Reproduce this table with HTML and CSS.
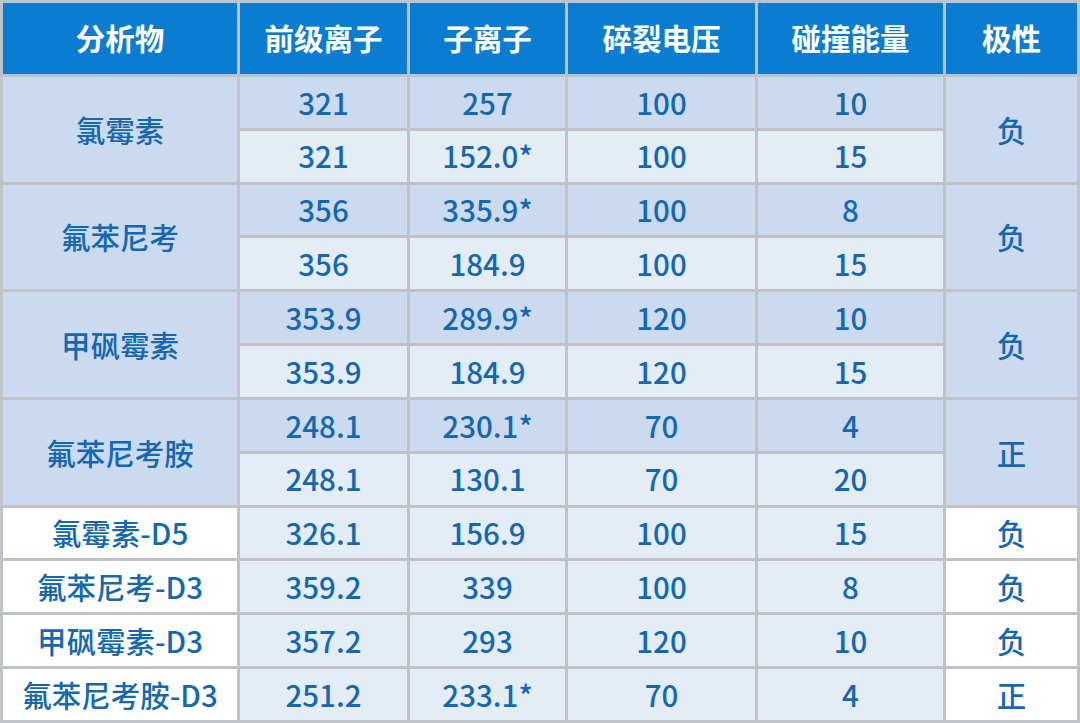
FILE: index.html
```html
<!DOCTYPE html>
<html lang="zh">
<head>
<meta charset="utf-8">
<link rel="stylesheet" href="styles.css">
</head>
<body>
<div class="grid">
  <div class="hd">分析物</div>
  <div class="hd">前级离子</div>
  <div class="hd">子离子</div>
  <div class="hd">碎裂电压</div>
  <div class="hd">碰撞能量</div>
  <div class="hd">极性</div>

  <div class="c m span2">氯霉素</div>
  <div class="c d">321</div><div class="c d">257</div><div class="c d">100</div><div class="c d">10</div>
  <div class="c m span2">负</div>
  <div class="c l">321</div><div class="c l">152.0*</div><div class="c l">100</div><div class="c l">15</div>

  <div class="c m span2">氟苯尼考</div>
  <div class="c d">356</div><div class="c d">335.9*</div><div class="c d">100</div><div class="c d">8</div>
  <div class="c m span2">负</div>
  <div class="c l">356</div><div class="c l">184.9</div><div class="c l">100</div><div class="c l">15</div>

  <div class="c m span2">甲砜霉素</div>
  <div class="c d">353.9</div><div class="c d">289.9*</div><div class="c d">120</div><div class="c d">10</div>
  <div class="c m span2">负</div>
  <div class="c l">353.9</div><div class="c l">184.9</div><div class="c l">120</div><div class="c l">15</div>

  <div class="c m span2">氟苯尼考胺</div>
  <div class="c d">248.1</div><div class="c d">230.1*</div><div class="c d">70</div><div class="c d">4</div>
  <div class="c m span2">正</div>
  <div class="c l">248.1</div><div class="c l">130.1</div><div class="c l">70</div><div class="c l">20</div>

  <div class="c w">氯霉素-D5</div>
  <div class="c l">326.1</div><div class="c l">156.9</div><div class="c l">100</div><div class="c l">15</div>
  <div class="c w">负</div>

  <div class="c w">氟苯尼考-D3</div>
  <div class="c l">359.2</div><div class="c l">339</div><div class="c l">100</div><div class="c l">8</div>
  <div class="c w">负</div>

  <div class="c w">甲砜霉素-D3</div>
  <div class="c l">357.2</div><div class="c l">293</div><div class="c l">120</div><div class="c l">10</div>
  <div class="c w">负</div>

  <div class="c w">氟苯尼考胺-D3</div>
  <div class="c l">251.2</div><div class="c l">233.1*</div><div class="c l">70</div><div class="c l">4</div>
  <div class="c w">正</div>
</div>
</body>
</html>
```

FILE: styles.css
```css
html, body {
  margin: 0;
  padding: 0;
  background: #bfc3c8;
}
.grid {
  width: 1080px;
  height: 723px;
  box-sizing: border-box;
  padding: 3px;
  gap: 3px;
  background: #bfc3c8;
  display: grid;
  grid-template-columns: 234px 167px 155px 187px 185px 131px;
  grid-template-rows: 71px repeat(12, 1fr);
  font-family: "Noto Sans CJK SC", "Noto Sans", sans-serif;
  font-size: 29.5px;
  line-height: 1;
}
.hd {
  background: #0b7dd0;
  color: #ffffff;
  font-weight: 700;
  display: flex;
  align-items: center;
  justify-content: center;
  padding-bottom: 2px;
}
.c {
  display: flex;
  align-items: center;
  justify-content: center;
  color: #1468b2;
  font-weight: 500;
}
.span2 { grid-row: span 2; }
.m { background: #cbdaee; }
.d { background: #cbdaee; }
.l { background: #e4ecf6; }
.w { background: #ffffff; }
```
